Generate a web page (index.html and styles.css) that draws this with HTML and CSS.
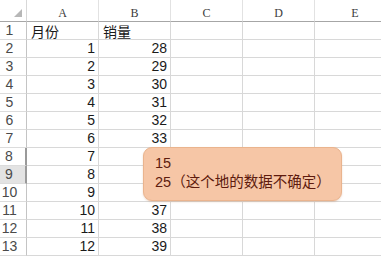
FILE: index.html
```html
<!DOCTYPE html>
<html lang="zh-CN">
<head>
<meta charset="utf-8">
<link rel="stylesheet" href="styles.css">
</head>
<body>
<div class="sheet">
  <div class="grid">
    <div class="corner"><span class="tri"></span></div>
    <div class="colhead">A</div>
    <div class="colhead">B</div>
    <div class="colhead">C</div>
    <div class="colhead">D</div>
    <div class="colhead last">E</div>

    <div class="rowhead">1</div><div class="cell txt">月份</div><div class="cell txt">销量</div><div class="cell"></div><div class="cell"></div><div class="cell last"></div>
    <div class="rowhead">2</div><div class="cell num">1</div><div class="cell num">28</div><div class="cell"></div><div class="cell"></div><div class="cell last"></div>
    <div class="rowhead">3</div><div class="cell num">2</div><div class="cell num">29</div><div class="cell"></div><div class="cell"></div><div class="cell last"></div>
    <div class="rowhead">4</div><div class="cell num">3</div><div class="cell num">30</div><div class="cell"></div><div class="cell"></div><div class="cell last"></div>
    <div class="rowhead">5</div><div class="cell num">4</div><div class="cell num">31</div><div class="cell"></div><div class="cell"></div><div class="cell last"></div>
    <div class="rowhead">6</div><div class="cell num">5</div><div class="cell num">32</div><div class="cell"></div><div class="cell"></div><div class="cell last"></div>
    <div class="rowhead">7</div><div class="cell num">6</div><div class="cell num">33</div><div class="cell"></div><div class="cell"></div><div class="cell last"></div>
    <div class="rowhead mark">8</div><div class="cell num">7</div><div class="cell num"></div><div class="cell"></div><div class="cell"></div><div class="cell last"></div>
    <div class="rowhead mark sel">9</div><div class="cell num">8</div><div class="cell num"></div><div class="cell"></div><div class="cell"></div><div class="cell last"></div>
    <div class="rowhead">10</div><div class="cell num">9</div><div class="cell num"></div><div class="cell"></div><div class="cell"></div><div class="cell last"></div>
    <div class="rowhead">11</div><div class="cell num">10</div><div class="cell num">37</div><div class="cell"></div><div class="cell"></div><div class="cell last"></div>
    <div class="rowhead">12</div><div class="cell num">11</div><div class="cell num">38</div><div class="cell"></div><div class="cell"></div><div class="cell last"></div>
    <div class="rowhead">13</div><div class="cell num">12</div><div class="cell num">39</div><div class="cell"></div><div class="cell"></div><div class="cell last"></div>
  </div>
  <div class="callout">
    <div class="line">15</div>
    <div class="line">25（这个地的数据不确定）</div>
  </div>
</div>
</body>
</html>
```
FILE: styles.css
```css
html, body {
  margin: 0;
  padding: 0;
  background: #ffffff;
}
.sheet {
  position: relative;
  width: 381px;
  height: 260px;
  overflow: hidden;
}
.grid {
  display: grid;
  grid-template-columns: 27px 72px 72px 72px 72px 80px;
  grid-template-rows: 22px repeat(13, 18px);
  font-family: "Liberation Sans", "Noto Sans CJK SC", sans-serif;
  font-size: 14px;
  color: #1a1a1a;
}
.grid > div {
  box-sizing: border-box;
  border-right: 1px solid #d8d8d8;
  border-bottom: 1px solid #d8d8d8;
  line-height: 17px;
  white-space: nowrap;
  overflow: hidden;
}
.corner {
  position: relative;
  border-bottom: 1px solid #a6a6a6 !important;
}
.tri {
  position: absolute;
  left: 14px;
  top: 9px;
  width: 0;
  height: 0;
  border-left: 8px solid transparent;
  border-bottom: 8px solid #b7b7b7;
}
.colhead {
  font-family: "Liberation Serif", serif;
  font-size: 12px;
  color: #3c3c3c;
  text-align: center;
  line-height: 26px !important;
  border-bottom: 1px solid #a6a6a6 !important;
  border-right-color: #e2e2e2 !important;
}
.rowhead {
  color: #4a4a4a;
  text-align: center;
  padding-right: 7px;
  font-size: 14px;
  border-right: 1px solid #c4c4c4 !important;
  border-bottom-color: #dcdcdc !important;
}
.rowhead.mark {
  border-right: 2px solid #9a9a9a !important;
}
.rowhead.sel {
  background: #e3e3e3;
}
.cell.num {
  text-align: right;
  padding-right: 3px;
}
.cell.txt {
  font-family: "Noto Sans CJK SC", sans-serif;
  padding-left: 4px;
  font-size: 14px;
  line-height: 18px;
}
.grid > .last {
  border-right: none;
}
.callout {
  position: absolute;
  left: 143px;
  top: 147px;
  width: 199px;
  height: 54px;
  box-sizing: border-box;
  background: #f6c6a6;
  border: 1px solid #eab48e;
  border-radius: 9px;
  box-shadow: 0 1px 2px rgba(200, 140, 100, 0.35);
  padding: 6px 0 0 11px;
  font-family: "Liberation Sans", "Noto Sans CJK SC", sans-serif;
  font-size: 14.5px;
  color: #5e1b0e;
}
.callout .line {
  height: 19px;
  line-height: 19px;
  white-space: nowrap;
}
```
